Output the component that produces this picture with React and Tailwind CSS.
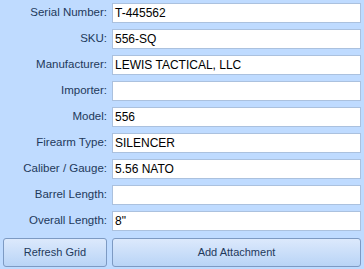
import React from 'react';

const fields = [
    { label: 'Serial Number:', value: 'T-445562' },
    { label: 'SKU:', value: '556-SQ' },
    { label: 'Manufacturer:', value: 'LEWIS TACTICAL, LLC' },
    { label: 'Importer:', value: '' },
    { label: 'Model:', value: '556' },
    { label: 'Firearm Type:', value: 'SILENCER' },
    { label: 'Caliber / Gauge:', value: '5.56 NATO' },
    { label: 'Barrel Length:', value: '' },
    { label: 'Overall Length:', value: '8"' },
];

export default function App() {
    return (
        <div className="h-[269px] w-[364px] bg-[#bfdbff] px-[3px] pt-[3px] text-[11px]" style={{ fontFamily: '"Liberation Sans", Arial, sans-serif' }}>
            <div className="flex flex-col gap-[6px]">
                {fields.map((f) => (
                    <div key={f.label} className="flex h-[20px] items-center">
                        <div className="w-[104px] shrink-0 text-right text-[11.5px] text-[#1e395b]">{f.label}</div>
                        <div className="ml-[5px] flex h-[20px] flex-1 items-center border border-[#abc1de] bg-white px-[2px] text-[12px] text-black">
                            {f.value}
                        </div>
                    </div>
                ))}
            </div>
            <div className="mt-[7px] flex gap-[5px]">
                <button className="h-[29px] w-[104px] rounded-[3px] border border-[#7d9ac3] bg-gradient-to-b from-[#dce9fc] to-[#b9d4f6] text-[#1e395b]">
                    Refresh Grid
                </button>
                <button className="h-[29px] flex-1 rounded-[3px] border border-[#7d9ac3] bg-gradient-to-b from-[#dce9fc] to-[#b9d4f6] text-[#1e395b]">
                    Add Attachment
                </button>
            </div>
        </div>
    );
}
